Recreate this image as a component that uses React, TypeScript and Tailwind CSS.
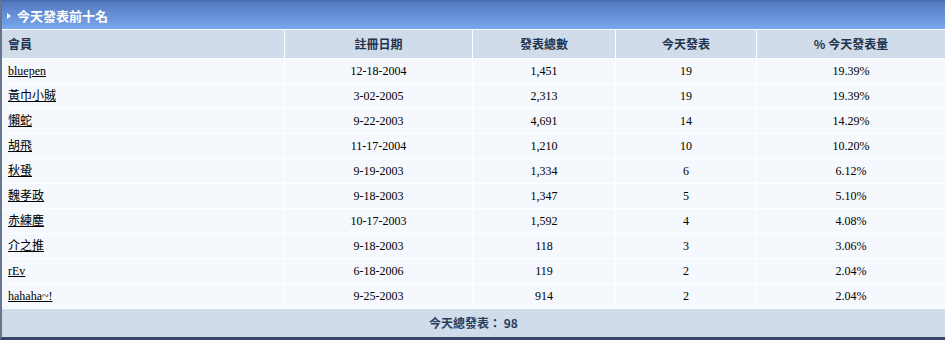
const rows = [
  { name: 'bluepen', date: '12-18-2004', total: '1,451', today: 19, pct: '19.39%' },
  { name: '黃巾小賊', date: '3-02-2005', total: '2,313', today: 19, pct: '19.39%' },
  { name: '懶蛇', date: '9-22-2003', total: '4,691', today: 14, pct: '14.29%' },
  { name: '胡飛', date: '11-17-2004', total: '1,210', today: 10, pct: '10.20%' },
  { name: '秋蛩', date: '9-19-2003', total: '1,334', today: 6, pct: '6.12%' },
  { name: '魏孝政', date: '9-18-2003', total: '1,347', today: 5, pct: '5.10%' },
  { name: '赤練塵', date: '10-17-2003', total: '1,592', today: 4, pct: '4.08%' },
  { name: '介之推', date: '9-18-2003', total: '118', today: 3, pct: '3.06%' },
  { name: 'rEv', date: '6-18-2006', total: '119', today: 2, pct: '2.04%' },
  { name: 'hahaha~!', date: '9-25-2003', total: '914', today: 2, pct: '2.04%' },
];

const cols = 'grid grid-cols-[282px_187px_142px_140px_1fr] gap-x-px';

export default function App() {
  return (
    <div
      className="w-[945px] h-[340px] bg-white border-l-2 border-l-[#66768f] border-b-[3px] border-b-[#36476a] flex flex-col overflow-hidden"
      style={{ fontFamily: '"Liberation Serif", "Noto Sans CJK TC", serif' }}
    >
      {/* Title bar */}
      <div className="h-[29px] shrink-0 flex items-center gap-[6px] pl-[5px] border-t-2 border-t-[#4a6db2] bg-gradient-to-b from-[#5479c0] to-[#79a8ec]">
        <svg width="4" height="6" viewBox="0 0 4 6" className="mt-px">
          <path d="M0 0 L4 3 L0 6 Z" fill="#ffffff" />
        </svg>
        <span
          className="text-white text-[13px] font-bold leading-none"
          style={{ fontFamily: '"Noto Sans CJK TC", sans-serif' }}
        >
          今天發表前十名
        </span>
      </div>
      <div className="h-px shrink-0 bg-white" />

      {/* Header */}
      <div
        className={`${cols} h-[28px] shrink-0 text-[12px] font-bold text-[#22324f]`}
        style={{ fontFamily: '"Noto Sans CJK TC", sans-serif' }}
      >
        <div className="bg-[#d0dce9] flex items-center pl-[6px]">會員</div>
        <div className="bg-[#d0dce9] flex items-center justify-center">註冊日期</div>
        <div className="bg-[#d0dce9] flex items-center justify-center">發表總數</div>
        <div className="bg-[#d0dce9] flex items-center justify-center">今天發表</div>
        <div className="bg-[#d0dce9] flex items-center justify-center">% 今天發表量</div>
      </div>
      <div className="h-px shrink-0 bg-white" />

      {/* Rows */}
      {rows.map((r) => (
        <div key={r.name} className="shrink-0">
          <div className={`${cols} h-[24px] text-[12px] text-black`}>
            <div className="bg-[#f5f8fc] flex items-center pl-[6px]">
              <a href="#" className="underline text-black">{r.name}</a>
            </div>
            <div className="bg-[#f5f8fc] flex items-center justify-center">{r.date}</div>
            <div className="bg-[#f5f8fc] flex items-center justify-center">{r.total}</div>
            <div className="bg-[#f5f8fc] flex items-center justify-center">{r.today}</div>
            <div className="bg-[#f5f8fc] flex items-center justify-center">{r.pct}</div>
          </div>
          <div className="h-px bg-white" />
        </div>
      ))}

      {/* Footer */}
      <div
        className="flex-1 bg-[#d0dce9] flex items-center justify-center text-[12px] font-bold text-[#2a3c5e]"
        style={{ fontFamily: '"Noto Sans CJK TC", sans-serif' }}
      >
        今天總發表： 98
      </div>
    </div>
  );
}
